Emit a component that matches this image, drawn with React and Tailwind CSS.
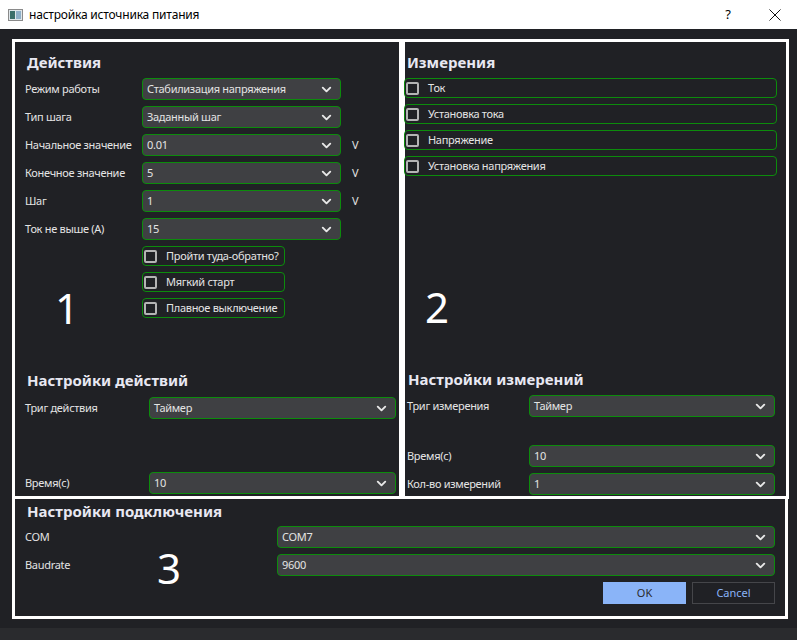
import { ChevronDown } from 'lucide-react';

const FONT = { fontFamily: '"Noto Sans", "Open Sans", sans-serif' };

const Combo = ({ value, className = '' }) => (
  <div
    className={`flex h-[22px] items-center justify-between rounded-[4px] border border-[#0c8c0c] bg-[#3f4043] pl-[4px] pr-[6px] text-[11px] tracking-[-0.3px] text-[#e4e4e4] ${className}`}
  >
    <span>{value}</span>
    <ChevronDown size={15} strokeWidth={3} className="text-[#e8e8e8]" />
  </div>
);

const Box = () => (
  <span className="h-[13px] w-[13px] shrink-0 rounded-[2px] border-2 border-[#b4b4b4] bg-[#202125]" />
);

const CheckRow = ({ label, className = '' }) => (
  <div
    className={`flex h-[20px] items-center gap-[9px] whitespace-nowrap rounded-[4px] border border-[#0c8c0c] pl-[1px] text-[11px] tracking-[-0.3px] text-[#e4e4e4] ${className}`}
  >
    <Box />
    <span>{label}</span>
  </div>
);

const Row = ({ label, labelW, children, className = '' }) => (
  <div className={`flex items-center ${className}`}>
    <span
      className="shrink-0 whitespace-nowrap text-[11px] tracking-[-0.3px] text-[#e4e4e4]"
      style={{ width: labelW }}
    >
      {label}
    </span>
    {children}
  </div>
);

const Heading = ({ children, className = '' }) => (
  <div className={`h-[20px] text-[15px] font-bold leading-[20px] text-[#e8e8f2] ${className}`}>
    {children}
  </div>
);

const Mark = ({ children, className }) => (
  <span className={`absolute text-[42px] leading-none text-white ${className}`}>{children}</span>
);

export default function App() {
  return (
    <div className="flex h-[640px] w-[797px] flex-col overflow-hidden bg-[#202125]" style={FONT}>
      {/* title bar */}
      <div className="flex h-[29px] shrink-0 items-center bg-white pl-[8px] text-[12px] text-black">
        <div className="mr-[6px] flex h-[12px] w-[15px] items-center border border-[#8a8a8a] bg-[#dfe6ea]">
          <div className="ml-[1px] h-[8px] w-[5px] bg-[#3b6f6a]" />
          <div className="ml-[1px] h-[8px] w-[5px] bg-[#8fb0c8]" />
        </div>
        <span className="tracking-[-0.2px]">настройка источника питания</span>
        <span className="ml-auto mr-[38px] text-[13px]">?</span>
        <svg width="12" height="12" viewBox="0 0 12 12" className="mr-[16px]">
          <path d="M0.5 0.5 L11.5 11.5 M11.5 0.5 L0.5 11.5" stroke="#111" strokeWidth="1" fill="none" />
        </svg>
      </div>

      <div className="flex flex-col pl-[12px] pt-[10px]">
        <div className="flex">
          {/* panel 1 */}
          <div className="relative flex h-[460px] w-[390px] flex-col border-[3px] border-white pl-[10px] pr-[3px] pt-[10px]">
            <Heading className="pl-[2px]">Действия</Heading>
            <div className="mt-[6px] flex flex-col gap-[6px]">
              <Row label="Режим работы" labelW={117}>
                <Combo value="Стабилизация напряжения" className="w-[199px]" />
              </Row>
              <Row label="Тип шага" labelW={117}>
                <Combo value="Заданный шаг" className="w-[199px]" />
              </Row>
              <Row label="Начальное значение" labelW={117}>
                <Combo value="0.01" className="w-[199px]" />
                <span className="ml-[11px] text-[11px] text-[#e4e4e4]">V</span>
              </Row>
              <Row label="Конечное значение" labelW={117}>
                <Combo value="5" className="w-[199px]" />
                <span className="ml-[11px] text-[11px] text-[#e4e4e4]">V</span>
              </Row>
              <Row label="Шаг" labelW={117}>
                <Combo value="1" className="w-[199px]" />
                <span className="ml-[11px] text-[11px] text-[#e4e4e4]">V</span>
              </Row>
              <Row label="Ток не выше (А)" labelW={117}>
                <Combo value="15" className="w-[199px]" />
              </Row>
            </div>
            <div className="ml-[117px] mt-[6px] flex w-[143px] flex-col gap-[6px]">
              <CheckRow label="Пройти туда-обратно?" />
              <CheckRow label="Мягкий старт" />
              <CheckRow label="Плавное выключение" />
            </div>
            <Mark className="left-[40px] top-[245px]">1</Mark>
            <Heading className="mt-[52px] pl-[2px]">Настройки действий</Heading>
            <Row label="Триг действия" labelW={124} className="mt-[7px]">
              <Combo value="Таймер" className="w-[247px]" />
            </Row>
            <Row label="Время(с)" labelW={124} className="mt-[53px]">
              <Combo value="10" className="w-[247px]" />
            </Row>
          </div>

          {/* panel 2 */}
          <div className="relative flex h-[460px] w-[387px] flex-col border-[3px] border-white pt-[10px]">
            <Heading className="pl-[2px]">Измерения</Heading>
            <div className="-ml-[1px] mt-[6px] flex w-[373px] flex-col gap-[6px]">
              <CheckRow label="Ток" />
              <CheckRow label="Установка тока" />
              <CheckRow label="Напряжение" />
              <CheckRow label="Установка напряжения" />
            </div>
            <Mark className="left-[20px] top-[244px]">2</Mark>
            <Heading className="mt-[193px] pl-[3px]">Настройки измерений</Heading>
            <Row label="Триг измерения" labelW={122} className="mt-[6px] pl-[2px]">
              <Combo value="Таймер" className="w-[246px]" />
            </Row>
            <Row label="Время(с)" labelW={122} className="mt-[28px] pl-[2px]">
              <Combo value="10" className="w-[246px]" />
            </Row>
            <Row label="Кол-во измерений" labelW={122} className="mt-[6px] pl-[2px]">
              <Combo value="1" className="w-[246px]" />
            </Row>
          </div>
        </div>

        {/* panel 3 */}
        <div className="relative -mt-[3px] flex h-[123px] w-[776px] flex-col border-[3px] border-white pl-[10px] pr-[10px] pt-[2px]">
          <Heading className="pl-[2px]">Настройки подключения</Heading>
          <Row label="COM" labelW={252} className="mt-[5px]">
            <Combo value="COM7" className="w-[498px]" />
          </Row>
          <Row label="Baudrate" labelW={252} className="mt-[6px]">
            <Combo value="9600" className="w-[498px]" />
          </Row>
          <div className="mt-[6px] flex justify-end gap-[6px]">
            <button className="h-[22px] w-[83px] bg-[#8ab4f8] text-[11px] text-[#2a2b2e]">OK</button>
            <button className="h-[22px] w-[83px] border border-[#45464a] bg-[#202125] text-[11px] text-[#8ab4f8]">
              Cancel
            </button>
          </div>
          <Mark className="left-[142px] top-[48px]">3</Mark>
        </div>
      </div>

      <div className="mt-auto h-[12px] bg-[#2a2b2e]" />
    </div>
  );
}
